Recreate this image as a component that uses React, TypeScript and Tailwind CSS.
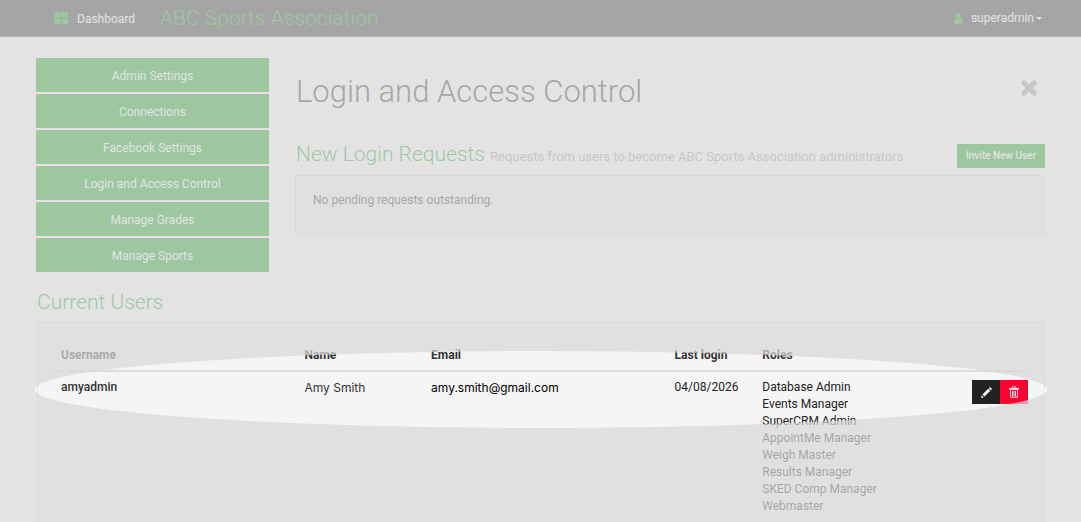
const menu = [
  'Admin Settings',
  'Connections',
  'Facebook Settings',
  'Login and Access Control',
  'Manage Grades',
  'Manage Sports',
];

const columns = [
  { label: 'Username', className: 'w-[25%]' },
  { label: 'Name', className: 'w-[13%]' },
  { label: 'Email', className: 'w-[25%]' },
  { label: 'Last login', className: 'w-[9%]' },
  { label: 'Roles', className: '' },
];

const users = [
  {
    username: 'amyadmin',
    name: 'Amy Smith',
    email: 'amy.smith@gmail.com',
    lastLogin: '04/08/2026',
    roles: [
      'Database Admin',
      'Events Manager',
      'SuperCRM Admin',
      'AppointMe Manager',
      'Weigh Master',
      'Results Manager',
      'SKED Comp Manager',
      'Webmaster',
    ],
  },
];

function GridIcon() {
  return (
    <svg viewBox="0 0 14 12" className="w-3.5 h-3 fill-[#009a0e]" aria-hidden="true">
      <rect x="0" y="0" width="6.6" height="5.6" rx="0.8" />
      <rect x="7.4" y="0" width="6.6" height="5.6" rx="0.8" />
      <rect x="0" y="6.4" width="6.6" height="5.6" rx="0.8" />
      <rect x="7.4" y="6.4" width="6.6" height="5.6" rx="0.8" />
    </svg>
  );
}

function UserIcon() {
  return (
    <svg viewBox="0 0 9 11" className="w-[9px] h-[11px] fill-[#009a0e]" aria-hidden="true">
      <circle cx="4.5" cy="2.8" r="2.6" />
      <path d="M2 5C.5 5.2 0 6.8 0 8.8 0 10.2.8 11 2 11h5c1.2 0 2-.8 2-2.2C9 6.8 8.5 5.2 7 5c-.6.6-1.5 1-2.5 1S2.6 5.6 2 5z" />
    </svg>
  );
}

function CloseIcon() {
  return (
    <svg viewBox="0 0 16 16" className="w-4 h-4" stroke="#999" strokeWidth="5" strokeLinecap="round" strokeLinejoin="round" aria-hidden="true">
      <path d="M2.8 2.8L13.2 13.2M13.2 2.8L2.8 13.2" />
    </svg>
  );
}

function PencilIcon() {
  return (
    <svg viewBox="0 0 11 11" className="w-[11px] h-[11px] fill-white" aria-hidden="true">
      <path d="M0 11l.7-2.8L2.800 10.300zM1.400 7.500L7.200 1.700 9.300 3.800 3.500 9.600zM7.800 1.100L8.500.4c.3-.3.7-.3 1 0l1.100 1.100c.3.3.3.7 0 1L9.900 3.200z" />
    </svg>
  );
}

function TrashIcon() {
  return (
    <svg viewBox="0 0 10 12" className="w-2.5 h-3" fill="none" stroke="#ffd6de" aria-hidden="true">
      <path d="M0 2.5h10M3.2 2.3V.8h3.6v1.5M1.5 4v7.3h7V4M.5 3.500h9M3.500 5v5.500M5 5v5.500M6.500 5v5.500" />
    </svg>
  );
}

export default function App() {
  return (
    <div className="relative min-h-screen overflow-hidden bg-white font-[Roboto,sans-serif] text-xs text-[#222]">
      <header className="flex items-center h-[37px] pl-[54px] pr-[39px] bg-[#222] border-b border-[#555] text-white">
        <a href="#dashboard" className="flex items-center gap-[9px]">
          <GridIcon />
          <span className="pt-0.5">Dashboard</span>
        </a>
        <a href="#home" className="ml-[25px] text-[21px] font-light text-[#009a0e]">ABC Sports Association</a>
        <button className="ml-auto flex items-center">
          <UserIcon />
          <span className="ml-2">superadmin</span>
          <span className="ml-0.5 border-x-[3px] border-t-[3px] border-x-transparent border-t-white" />
        </button>
      </header>

      <div className="px-9 pt-[21px]">
        <div className="flex gap-[26px]">
          <nav className="w-[233px] shrink-0 flex flex-col gap-0.5 pb-px">
            {menu.map(item => (
              <a key={item} href="#menu" className="flex items-center justify-center h-[34px] pt-px bg-[#009a0e] text-white">
                {item}
              </a>
            ))}
          </nav>

          <main className="flex-1">
            <div className="flex items-center justify-between h-[68px] pl-px pr-2 border-b border-[#f4f4f4]">
              <h1 className="text-[31px] font-light">Login and Access Control</h1>
              <button aria-label="Close" className="mb-2">
                <CloseIcon />
              </button>
            </div>
            <div className="flex items-center justify-between pt-4">
              <h2 className="pl-px text-[21px] leading-6 font-light text-[#009a0e]">
                New Login Requests <small className="text-[13px] font-normal text-[#999]">Requests from users to become ABC Sports Association administrators</small>
              </h2>
              <button className="h-6 px-[9px] bg-[#009a0e] text-white text-[10px] font-medium">Invite New User</button>
            </div>
            <section className="mt-1.5 h-[60px] px-[17px] pt-4 bg-[#f5f5f5] border border-[#e3e3e3]">
              <p>No pending requests outstanding.</p>
            </section>
            <hr className="mt-4 border-[#f4f4f4]" />
          </main>
        </div>

        <h2 className="mt-[17px] pl-px text-[21px] leading-6 font-light text-[#009a0e]">Current Users</h2>
        <div className="relative mt-2 ml-px">
          <section className="px-4 pt-6 pb-8 bg-[#f5f5f5] border border-[#e3e3e3]">
            <table className="w-full table-fixed">
              <thead>
                <tr className="border-b-2 border-[#ddd] text-left text-[#333]">
                  {columns.map(c => (
                    <th key={c.label} className={`px-[7px] pb-[7px] leading-4 font-bold ${c.className}`}>{c.label}</th>
                  ))}
                  <th className="w-[72px]" aria-label="Actions" />
                </tr>
              </thead>
              <tbody>
                {users.map(u => (
                  <tr key={u.username} className="align-top leading-[17px]">
                    <td className="px-[7px] pt-[7px] font-medium text-[#333]">{u.username}</td>
                    <td className="px-[7px] pt-[7px] font-[Inter,sans-serif] text-[#333]">{u.name}</td>
                    <td className="px-[7px] pt-[7px] font-[Inter,sans-serif] text-black">{u.email}</td>
                    <td className="px-[7px] pt-[7px]">{u.lastLogin}</td>
                    <td className="px-[7px] pt-[7px]">
                      <ul>
                        {u.roles.map(role => <li key={role}>{role}</li>)}
                      </ul>
                    </td>
                    <td className="pt-2">
                      <div className="flex justify-end">
                        <button aria-label="Edit user" className="flex items-center justify-center w-7 h-6 bg-[#222]">
                          <PencilIcon />
                        </button>
                        <button aria-label="Delete user" className="flex items-center justify-center w-7 h-6 bg-[#ff0033]">
                          <TrashIcon />
                        </button>
                      </div>
                    </td>
                  </tr>
                ))}
              </tbody>
            </table>
          </section>

          {/* Spotlight over the user row, everything else is dimmed */}
          <div className="pointer-events-none absolute -inset-x-0.5 top-[29px] h-[77px] rounded-[50%] shadow-[0_0_0_2000px_rgba(216,216,216,0.72)]" />
        </div>
      </div>
    </div>
  );
}
